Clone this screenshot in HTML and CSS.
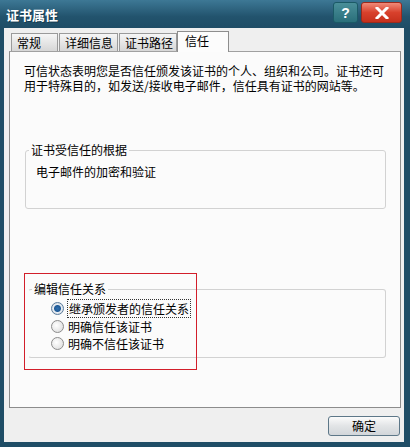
FILE: index.html
```html
<html>
  <head>
    <meta charset="utf-8" />
    <link rel="stylesheet" href="styles.css">
  </head>
  <body>
    <div class="window">
      <div class="titlebar">
        <span class="title">证书属性</span>
        <div class="title-buttons">
          <span class="tb-btn help">?</span>
          <span class="tb-btn close">
            <svg width="14" height="12" viewBox="0 0 14 12">
              <path d="M2 1 L12 11 M12 1 L2 11" stroke="#fff" stroke-width="3" stroke-linecap="square" />
            </svg>
          </span>
        </div>
      </div>
      <div class="client">
        <div class="tabs">
          <div class="tab t1">常规</div>
          <div class="tab t2">详细信息</div>
          <div class="tab t3">证书路径</div>
          <div class="tab active">信任</div>
        </div>
        <div class="panel">
          <p class="intro">
            可信状态表明您是否信任颁发该证书的个人、组织和公司。证书还可<br />
            用于特殊目的，如发送/接收电子邮件，信任具有证书的网站等。
          </p>
          <fieldset class="group basis">
            <legend>证书受信任的根据</legend>
            <div class="basis-text">电子邮件的加密和验证</div>
          </fieldset>
          <fieldset class="group edit">
            <legend>编辑信任关系</legend>
            <label class="radio">
              <span class="dot checked"></span>
              <span class="focus">继承颁发者的信任关系</span>
            </label>
            <label class="radio">
              <span class="dot"></span>
              <span>明确信任该证书</span>
            </label>
            <label class="radio">
              <span class="dot"></span>
              <span>明确不信任该证书</span>
            </label>
          </fieldset>
          <div class="highlight"></div>
        </div>
        <div class="buttons">
          <button class="btn">确定</button>
        </div>
      </div>
    </div>
  </body>
</html>
```

FILE: styles.css
```css
body {
  margin: 0;
  font-family: "Noto Sans CJK SC", sans-serif;
  font-size: 12px;
  color: #000;
}
.window {
  width: 410px;
  height: 447px;
  background: #1f4d66;
  display: flex;
  flex-direction: column;
  box-sizing: border-box;
}
.titlebar {
  height: 28px;
  display: flex;
  align-items: center;
  padding-left: 6px;
  background: linear-gradient(#3d7895, #22536d 60%, #1f4d66);
}
.title {
  color: #fff;
  font-weight: bold;
  font-size: 13px;
  text-shadow: 1px 1px 0 #173a4d;
}
.title-buttons {
  margin-left: auto;
  margin-right: 8px;
  display: flex;
  gap: 3px;
  align-self: flex-start;
  margin-top: 2px;
}
.tb-btn {
  height: 19px;
  display: flex;
  align-items: center;
  justify-content: center;
  border-radius: 3px;
  color: #fff;
  font-weight: bold;
  font-size: 14px;
  font-family: "Liberation Sans", sans-serif;
}
.help {
  width: 23px;
  background: linear-gradient(#4a8f99, #2a6f7a);
  border: 1px solid #1b5a66;
}
.close {
  width: 39px;
  background: linear-gradient(#f08a78, #d8412c 50%, #c5301c);
  border: 1px solid #9b2a1c;
}
.client {
  flex: 1;
  margin: 0 6px 5px 4px;
  background: #efefef;
  padding: 4px 3px 0 5px;
  display: flex;
  flex-direction: column;
}
.tabs {
  display: flex;
  padding-left: 2px;
  height: 19px;
  align-items: flex-end;
}
.tab {
  height: 17px;
  line-height: 17px;
  padding-left: 5px;
  box-sizing: content-box;
  background: linear-gradient(#f6f6f6, #d6d6d6);
  border: 1px solid #9a9a9a;
  border-bottom: none;
  margin-right: 1px;
}
.t1 {
  width: 40px;
}
.t2 {
  width: 52px;
}
.t3 {
  width: 51px;
}
.tab.active {
  height: 20px;
  line-height: 18px;
  padding-left: 7px;
  background: #fcfcfc;
  border-color: #8e8e8e;
  width: 43px;
  margin-left: -1px;
  margin-bottom: -1px;
  position: relative;
  z-index: 1;
}
.panel {
  height: 357px;
  background: #fbfbfb;
  border: 1px solid #8c8c8c;
  border-top-color: #a0a0a0;
  position: relative;
  box-sizing: border-box;
}
.intro {
  margin: 11px 0 0 14px;
  line-height: 15px;
}
.group {
  border: 1px solid #d2d2d2;
  border-radius: 3px;
  padding: 0;
  margin: 0;
}
.group legend {
  padding: 0 2px;
  margin-left: 3px;
  line-height: 14px;
}
.basis {
  margin: 50px 14px 0 15px;
  height: 64px;
}
.basis-text {
  margin: 6px 0 0 10px;
}
.edit {
  margin: 73px 14px 0 18px;
  height: 70px;
  border-left-color: transparent;
  border-right-color: #d2d2d2;
  padding-top: 4px;
}
.radio {
  display: flex;
  align-items: center;
  height: 17.5px;
  padding-left: 22px;
}
.dot {
  width: 11px;
  height: 11px;
  border-radius: 50%;
  border: 1px solid #8c8c8c;
  background: radial-gradient(circle at 40% 40%, #ffffff, #d8d8d8);
  margin-right: 4px;
  box-sizing: content-box;
}
.dot.checked {
  background: radial-gradient(circle, #2e6fb0 0, #1f5a96 3px, #e8eef5 4px, #d4d9de 6px);
  border-color: #5b7c9c;
}
.focus {
  outline: 1px dotted #333;
  outline-offset: 0;
  padding: 0 1px;
}
.highlight {
  position: absolute;
  left: 14px;
  top: 221px;
  width: 171px;
  height: 95px;
  border: 1px solid #d21e2a;
}
.buttons {
  display: flex;
  justify-content: flex-end;
  padding: 8px 1px 0 0;
}
.btn {
  width: 72px;
  height: 20px;
  border: 1px solid #5d7788;
  border-radius: 3px;
  background: linear-gradient(#fbfbfb, #e2e4e6 50%, #d2d6da);
  font-family: "Noto Sans CJK SC", sans-serif;
  font-size: 12px;
  padding: 0;
  line-height: 16px;
}
```
